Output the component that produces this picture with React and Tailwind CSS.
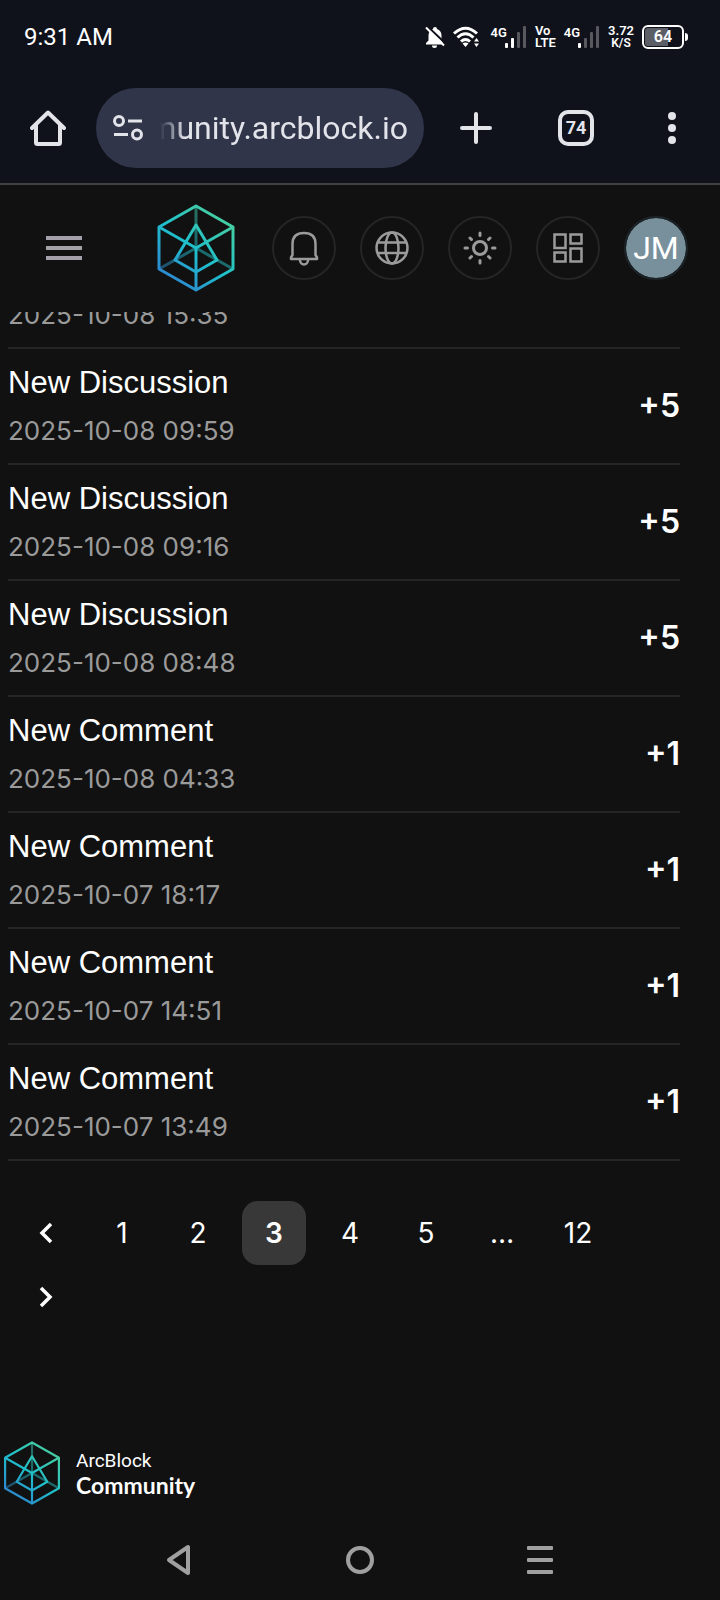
import { useId, useState } from 'react';

const records = [
  { title: 'New Discussion', date: '2025-10-08 09:59', points: '+5' },
  { title: 'New Discussion', date: '2025-10-08 09:16', points: '+5' },
  { title: 'New Discussion', date: '2025-10-08 08:48', points: '+5' },
  { title: 'New Comment', date: '2025-10-08 04:33', points: '+1' },
  { title: 'New Comment', date: '2025-10-07 18:17', points: '+1' },
  { title: 'New Comment', date: '2025-10-07 14:51', points: '+1' },
  { title: 'New Comment', date: '2025-10-07 13:49', points: '+1' },
];

function Logo({ className }) {
  const id = useId();
  return (
    <svg viewBox="0 0 80 88" className={className} fill="none" stroke={`url(#${id})`} strokeWidth="3" strokeLinejoin="round">
      <defs>
        <linearGradient id={id} gradientUnits="userSpaceOnUse" x1="8" y1="80" x2="68" y2="10">
          <stop offset="0" stopColor="#2f7fd0" />
          <stop offset="0.5" stopColor="#1fc0cb" />
          <stop offset="1" stopColor="#48cfa0" />
        </linearGradient>
      </defs>
      <path d="M40.01 2V44M3 65L40 44L77 65" opacity="0.5" />
      <path d="M40 2L77 23V65L40 86L3 65V23Z" />
      <path d="M3 23L40 44L77 23M40 44L40.01 86" />
      <path d="M40 21L61 56L40 68L19 56Z" />
    </svg>
  );
}

function Signal({ active }) {
  return (
    <div className="flex">
      <span className="text-[13px] leading-[14px] font-semibold">4G</span>
      <svg viewBox="0 0 22 22" className="-ml-0.5 h-[22px] w-[22px]" fill="#fff">
        <rect x="0" y="17" width="3" height="5" rx="1" />
        <rect x="6" y="12" width="3" height="10" rx="1" opacity={active > 1 ? 1 : 0.3} />
        <rect x="12" y="6" width="3" height="16" rx="1" opacity="0.3" />
        <rect x="18" y="0" width="3" height="22" rx="1" opacity="0.3" />
      </svg>
    </div>
  );
}

function StatusBar() {
  return (
    <div className="flex h-[72px] items-center justify-between pt-0.5 pr-8 pl-6 font-[Roboto,sans-serif] text-white">
      <span className="text-2xl">9:31 AM</span>
      <div className="flex items-center gap-2">
        <svg viewBox="0 0 20 22" className="h-[22px] w-5" fill="#fff">
          <path d="M10 1a2 2 0 0 1 2 2a7 7 0 0 1 4.500 6.500V14.500L18 17V18.500H1V17l2.500-2.500V9.500A7 7 0 0 1 8 3a2 2 0 0 1 2-2zM7 19.500h5a2.500 2.500 0 0 1-5 0z" />
          <path d="M1 -1L20 17" stroke="#0f121b" strokeWidth="2" />
          <path d="M1 1.500L19 19.500" stroke="#fff" strokeWidth="2" />
        </svg>
        <svg viewBox="0 0 26 22" className="h-[22px] w-[26px]" fill="none" stroke="#fff" strokeWidth="3">
          <path d="M1 7.500Q12.500-3 24 7.500M4.500 11.500Q12.500 4 20.500 11.500M8 15.500Q12.500 11.500 17 15.500" />
          <path d="M12.500 21l-3-3.500q3-2 6 0z" fill="#fff" stroke="none" />
          <path d="M23.500 12l2.500 3.500h-5zM23.500 21l2.500-3.500h-5z" fill="#fff" stroke="none" />
        </svg>
        <div className="flex items-center gap-2 pl-1">
          <Signal active={2} />
          <div className="text-[13px] leading-3 font-semibold">
            <p>Vo</p>
            <p>LTE</p>
          </div>
          <Signal active={1} />
          <div className="text-center text-[13px] leading-3 font-semibold">
            <p>3.72</p>
            <p className="text-xs leading-3">K/S</p>
          </div>
        </div>
        <div className="flex items-center gap-px">
          <div className="flex h-6 w-[42px] items-center rounded-md border-2 border-white p-px">
            <div className="flex h-full w-full items-center justify-center rounded-[3px] bg-linear-to-r from-[#5c5e65] from-64% to-transparent to-64% text-base font-semibold">64</div>
          </div>
          <div className="h-2 w-[3px] rounded-r-sm bg-white" />
        </div>
      </div>
    </div>
  );
}

function BrowserBar() {
  return (
    <div className="flex h-[111px] items-center font-[Roboto,sans-serif] text-[#e3e3ea]">
      <button aria-label="Home" className="flex w-24 shrink-0 justify-center">
        <svg viewBox="0 0 36 36" className="size-9" fill="none" stroke="currentColor" strokeWidth="4" strokeLinecap="round" strokeLinejoin="round">
          <path d="M2 18L18 2.500L34 18M6 15V32.500Q6 34 7.500 34H28.500Q30 34 30 32.500V15" />
        </svg>
      </button>
      <div className="flex h-20 min-w-0 flex-1 items-center gap-4 rounded-full bg-[#30354a] pr-4 pl-4">
        <svg viewBox="0 0 32 26" className="h-[26px] w-8 shrink-0" fill="none" stroke="currentColor" strokeWidth="3">
          <circle cx="7" cy="6" r="4.500" />
          <path d="M16 6h14M2 19.500h14" />
          <circle cx="25" cy="19.500" r="4.500" />
        </svg>
        <input
          aria-label="Address"
          dir="rtl"
          readOnly
          value="community.arcblock.io"
          className="h-12 min-w-0 flex-1 bg-transparent text-[32px] outline-none mask-l-from-90% mask-l-to-100%"
        />
      </div>
      <div className="flex shrink-0 items-center">
        <button aria-label="New tab" className="flex w-[104px] justify-center">
          <svg viewBox="0 0 32 32" className="size-8" stroke="currentColor" strokeWidth="4" strokeLinecap="round">
            <path d="M16 2V30M2 16H30" />
          </svg>
        </button>
        <button aria-label="Tabs" className="flex w-24 justify-center">
          <span className="flex size-9 items-center justify-center rounded-[10px] border-4 border-[#e3e3ea] text-lg font-bold">74</span>
        </button>
        <button aria-label="Menu" className="flex w-24 justify-center">
          <svg viewBox="0 0 8 32" className="h-8 w-2" fill="currentColor">
            <circle cx="4" cy="4" r="4" />
            <circle cx="4" cy="16" r="4" />
            <circle cx="4" cy="28" r="4" />
          </svg>
        </button>
      </div>
    </div>
  );
}

function RoundButton({ label, children }) {
  return (
    <button aria-label={label} className="flex size-16 items-center justify-center rounded-full border-2 border-[#252525] text-[#9b9b9b]">
      <svg viewBox="0 0 36 36" className="size-9 shrink-0" fill="none" stroke="currentColor" strokeWidth="2.500">
        {children}
      </svg>
    </button>
  );
}

function SiteHeader() {
  return (
    <header className="flex h-[129px] items-center justify-between border-t-2 border-[#414145] pr-8 pb-0.5 pl-[46px]">
      <button aria-label="Open menu" className="flex w-9 flex-col gap-1.5">
        <span className="h-1 bg-[#a5a1ab]" />
        <span className="h-1 bg-[#a5a1ab]" />
        <span className="h-1 bg-[#a5a1ab]" />
      </button>
      <div className="flex items-center gap-9">
        <a href="#" aria-label="ArcBlock Community">
          <Logo className="h-[88px] w-20" />
        </a>
        <div className="flex items-center gap-6">
          <RoundButton label="Notifications">
            <path strokeLinejoin="round" d="M5 29V27.500L6.500 25V14Q6.500 3 18 3T29.500 14V25L31 27.500V29Z" />
            <path d="M14 30a4 4.500 0 0 0 8 0" />
          </RoundButton>
          <RoundButton label="Language">
            <circle cx="18" cy="18" r="15.500" />
            <ellipse cx="18" cy="18" rx="6.500" ry="15.500" />
            <path d="M3.500 12.500H32.500M3.500 23H32.500" />
          </RoundButton>
          <RoundButton label="Theme">
            <circle cx="18" cy="18" r="6.500" strokeWidth="3" />
            <path strokeWidth="3" strokeLinecap="round" d="M18 3v2.500M18 30.500V33M3 18h2.500M30.500 18H33M8 8l1.500 1.500M26.500 26.500l1.500 1.500M8 28l1.500-1.500M26.500 9.500l1.500-1.500" />
          </RoundButton>
          <RoundButton label="Apps">
            <path d="M4.500 4.500h11v13.500h-11zM20.500 4.500h11v9h-11zM20.500 18.500h11v13h-11zM4.500 22.500h11v9h-11z" />
          </RoundButton>
          <button aria-label="Account" className="flex size-16 items-center justify-center rounded-full border-2 border-[#1c2327] bg-[#78909c] bg-clip-padding font-[Roboto,sans-serif] text-[32px] text-white">
            JM
          </button>
        </div>
      </div>
    </header>
  );
}

function PageButton({ active, onClick, label, children }) {
  return (
    <button
      aria-label={label}
      onClick={onClick}
      className={`mx-1.5 flex size-16 items-center justify-center rounded-2xl ${active ? 'bg-[#383838] font-semibold' : ''}`}
    >
      {children}
    </button>
  );
}

function Pagination() {
  const [page, setPage] = useState(3);
  return (
    <nav aria-label="Pagination" className="flex flex-wrap text-[28px] text-white">
      <PageButton label="Previous page" onClick={() => setPage(Math.max(1, page - 1))}>
        <svg viewBox="0 0 14 22" className="h-[22px] w-3.5" fill="none" stroke="currentColor" strokeWidth="3.500">
          <path d="M12 2L3 11L12 20" />
        </svg>
      </PageButton>
      {[1, 2, 3, 4, 5].map(n => (
        <PageButton key={n} active={n === page} onClick={() => setPage(n)}>{n}</PageButton>
      ))}
      <span className="mx-1.5 flex size-16 items-center justify-center">…</span>
      <PageButton active={page === 12} onClick={() => setPage(12)}>12</PageButton>
      <PageButton label="Next page" onClick={() => setPage(Math.min(12, page + 1))}>
        <svg viewBox="0 0 14 22" className="h-[22px] w-3.5" fill="none" stroke="currentColor" strokeWidth="3.500">
          <path d="M2 2L11 11L2 20" />
        </svg>
      </PageButton>
    </nav>
  );
}

function SystemNav() {
  return (
    <div className="flex h-20 items-center justify-center gap-[150px] text-[#a0a0a0]">
      <button aria-label="Back">
        <svg viewBox="0 0 32 32" className="size-8" fill="none" stroke="currentColor" strokeWidth="4" strokeLinejoin="round">
          <path d="M26 3V29L7 16Z" />
        </svg>
      </button>
      <button aria-label="Home screen">
        <svg viewBox="0 0 32 32" className="size-8" fill="none" stroke="currentColor" strokeWidth="4">
          <circle cx="16" cy="16" r="12" />
        </svg>
      </button>
      <button aria-label="Recent apps">
        <svg viewBox="0 0 32 32" className="size-8" fill="currentColor">
          <rect x="1" y="2" width="26" height="4" rx="1" />
          <rect x="1" y="14" width="26" height="4" rx="1" />
          <rect x="1" y="26" width="26" height="4" rx="1" />
        </svg>
      </button>
    </div>
  );
}

export default function App() {
  return (
    <div className="min-h-screen bg-[#111111] font-[Inter,sans-serif]">
      <div className="bg-[#0f121b]">
        <StatusBar />
        <BrowserBar />
      </div>
      <SiteHeader />

      <main className="pr-10 pl-2">
        <div className="flex h-[37px] items-end overflow-hidden border-b-2 border-[#252525] pb-3">
          <p className="text-[26px] leading-10 text-[#9a9a9a]">2025-10-08 15:35</p>
        </div>
        <ul>
          {records.map(record => (
            <li key={record.date} className="flex h-[116px] items-center justify-between border-b-2 border-[#252525]">
              <div className="pb-0.5">
                <p className="font-['Liberation_Sans',sans-serif] text-[31px] leading-[48px] text-white">{record.title}</p>
                <p className="pt-1 text-[26px] leading-10 text-[#9a9a9a]">{record.date}</p>
              </div>
              <span className="text-[32px] font-semibold text-white">{record.points}</span>
            </li>
          ))}
        </ul>
        <div className="pt-10">
          <Pagination />
        </div>
      </main>

      <footer className="flex items-center gap-3.5 pt-[112px] pl-0.5">
        <Logo className="h-16 w-[60px]" />
        <div className="text-white">
          <p className="font-[Roboto,sans-serif] text-[19px] leading-6">ArcBlock</p>
          <p className="font-[Lato,sans-serif] text-[23px] leading-6 font-bold">Community</p>
        </div>
      </footer>

      <div className="pt-[15px]">
        <SystemNav />
      </div>
    </div>
  );
}
